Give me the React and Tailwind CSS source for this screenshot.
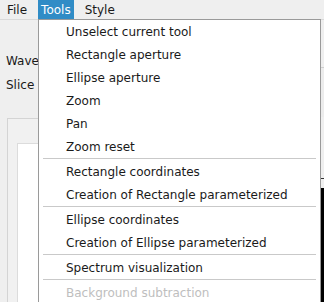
import React from "react";

const font = { fontFamily: '"DejaVu Sans", "Liberation Sans", sans-serif' };

function Item({ children, disabled }) {
  return (
    <div
      className={`h-[23px] flex items-center pl-[27px] text-[12px] whitespace-nowrap ${
        disabled ? "text-[#bebebe]" : "text-[#1a1a1a]"
      }`}
    >
      {children}
    </div>
  );
}

function Sep() {
  return <div className="h-[2px] mx-[4px] border-t border-[#c9c9c9]" />;
}

export default function App() {
  return (
    <div
      className="relative w-[324px] h-[302px] overflow-hidden bg-[#efefef] text-[#1a1a1a] flex flex-col"
      style={font}
    >
      {/* menu bar */}
      <div className="h-[20px] shrink-0 flex items-stretch pl-[4px] gap-[8px] text-[12px] border-b border-[#dadada]">
        <div className="px-[3px] flex items-center">File</div>
        <div className="px-[3px] flex items-center bg-[#308cc6] text-white">Tools</div>
        <div className="px-[3px] flex items-center">Style</div>
      </div>

      {/* window content */}
      <div className="flex-1 flex">
        <div className="flex-1 flex flex-col">
          <div className="pl-[6px] pt-[34px] w-[38px] overflow-hidden flex flex-col gap-[10px] text-[12px] whitespace-nowrap">
            <div className="h-[14px] leading-[14px]">Wave</div>
            <div className="h-[14px] leading-[14px]">Slice</div>
          </div>
          <div className="mt-[26px] ml-[7px] flex-1 border-l border-t border-[#d4d4d4] bg-[#f1f1f1] pl-[9px] pt-[24px]">
            <div className="h-full bg-white border-l border-t border-[#dcdcdc]" />
          </div>
        </div>
        <div className="w-[20px] flex flex-col">
          <div className="mt-[47px] h-[50px] border-t border-[#cfcfcf] bg-[#ececec]" />
          <div className="h-[50px] relative">
            <div className="absolute left-0 top-[48px] w-[2px] h-[3px] bg-[#333]" />
          </div>
          <div className="h-[12px] border-b border-[#333]" />
          <div className="flex-1 mt-[9px] bg-black" />
        </div>
      </div>

      {/* dropdown menu */}
      <div className="absolute left-[38px] top-[19px] w-[283px] h-[300px] bg-white border border-[#9a9a9a]">
        <Item>Unselect current tool</Item>
        <Item>Rectangle aperture</Item>
        <Item>Ellipse aperture</Item>
        <Item>Zoom</Item>
        <Item>Pan</Item>
        <Item>Zoom reset</Item>
        <Sep />
        <Item>Rectangle coordinates</Item>
        <Item>Creation of Rectangle parameterized</Item>
        <Sep />
        <Item>Ellipse coordinates</Item>
        <Item>Creation of Ellipse parameterized</Item>
        <Sep />
        <Item>Spectrum visualization</Item>
        <Sep />
        <Item disabled>Background subtraction</Item>
      </div>
    </div>
  );
}
